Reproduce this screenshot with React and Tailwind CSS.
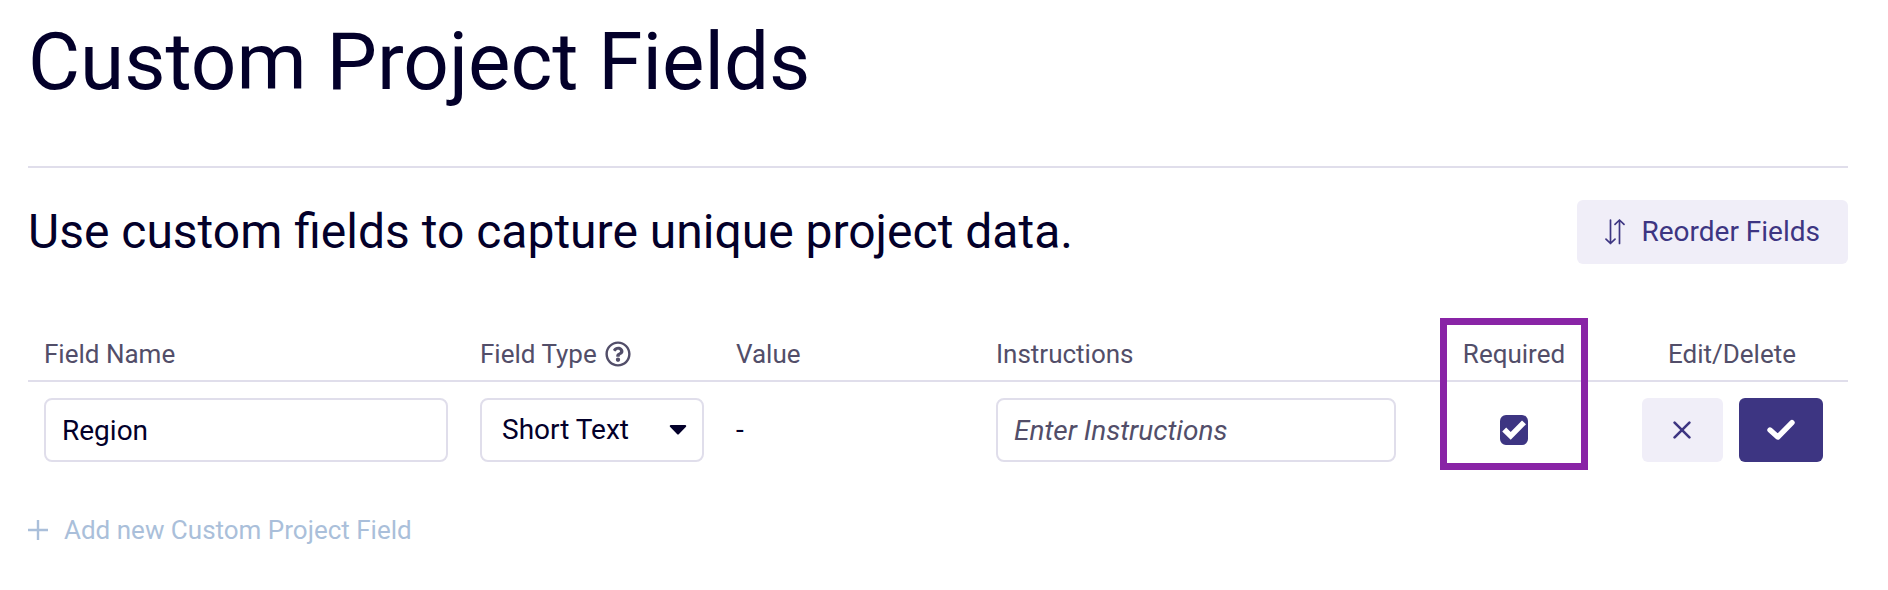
import { FaRegQuestionCircle } from "react-icons/fa";

const cell = "px-4 py-4";
const head = "border-b-2 border-[#e0deeb] px-4 pb-2 font-normal";

function ReorderIcon() {
  return (
    <svg aria-hidden="true" viewBox="0 0 20 26" className="h-[26px] w-5" fill="none" stroke="currentColor" strokeWidth="1.7" strokeLinecap="round" strokeLinejoin="round">
      <path d="M5.5 1V24.5M1 20.2L5.5 24.5L10 20.2" />
      <path d="M14.5 24.5V1M10 5.3L14.5 1L19 5.3" />
    </svg>
  );
}

function CloseIcon() {
  return (
    <svg aria-hidden="true" viewBox="0 0 18 18" className="size-[18px]" fill="none" stroke="currentColor" strokeWidth="2.6" strokeLinecap="round">
      <path d="M1.6 1.6L16.4 16.4M16.4 1.6L1.6 16.4" />
    </svg>
  );
}

function SaveIcon() {
  return (
    <svg aria-hidden="true" viewBox="0 0 28 22" className="h-[22px] w-7" fill="none" stroke="currentColor" strokeWidth="5.4" strokeLinecap="round" strokeLinejoin="round">
      <path d="M3 11L10.8 18L25 3.6" />
    </svg>
  );
}

function TickIcon() {
  return (
    <svg aria-hidden="true" viewBox="0 0 24 20" className="pointer-events-none invisible col-start-1 row-start-1 h-5 w-6 text-white peer-checked:visible" fill="none" stroke="currentColor" strokeWidth="5.6">
      <path d="M2.2 9.4L8.7 15.9L22 2.4" />
    </svg>
  );
}

function PlusIcon() {
  return (
    <svg aria-hidden="true" viewBox="0 0 20 20" className="size-5" fill="none" stroke="currentColor" strokeWidth="2.4">
      <path d="M10 0V20M0 10H20" />
    </svg>
  );
}

function CaretIcon() {
  return (
    <svg aria-hidden="true" viewBox="0 0 18 10" className="pointer-events-none absolute top-[27px] right-[17px] h-2.5 w-[18px]" fill="currentColor">
      <path d="M1.8 0H16.2C17.2 0 17.6 1.1 17 1.8L10 9C9.4 9.7 8.6 9.7 8 9L1 1.8C0.4 1.1 0.8 0 1.8 0Z" />
    </svg>
  );
}

export default function App() {
  return (
    <main className="min-h-screen bg-white pt-[18px] pr-10 pl-7 font-['Roboto',sans-serif] text-[#03002a]">
      <h1 className="border-b-2 border-[#e0deeb] pb-[60px] text-[80px] leading-[88px]">Custom Project Fields</h1>

      <div className="mt-8 flex items-center justify-between">
        <h2 className="text-[48px] leading-[64px]">Use custom fields to capture unique project data.</h2>
        <button type="button" className="flex h-16 items-center gap-4 rounded-md bg-[#f0eef8] px-7 text-[28px] text-[#3d3582]">
          <ReorderIcon />
          Reorder Fields
        </button>
      </div>

      <table className="mt-[72px] w-full table-fixed border-separate border-spacing-0 text-left text-[28px]">
        <colgroup>
          <col className="w-[436px]" />
          <col className="w-[256px]" />
          <col className="w-[260px]" />
          <col />
          <col className="w-[204px]" />
          <col className="w-[232px]" />
        </colgroup>
        <thead className="text-[26px] leading-9 text-[#524e69]">
          <tr>
            <th scope="col" id="col-name" className={head}>Field Name</th>
            <th scope="col" id="col-type" className={head}>
              <span className="flex items-center gap-2">
                Field Type
                <FaRegQuestionCircle aria-hidden="true" className="size-[26px]" />
              </span>
            </th>
            <th scope="col" className={head}>Value</th>
            <th scope="col" id="col-instructions" className={head}>Instructions</th>
            <th scope="col" id="col-required" className={`${head} relative text-center`}>
              Required
              <span className="pointer-events-none absolute inset-x-7 -top-[18px] h-[152px] border-[7px] border-[#8924a6]" />
            </th>
            <th scope="col" className={`${head} text-center`}>Edit/Delete</th>
          </tr>
        </thead>
        <tbody>
          <tr>
            <td className={cell}>
              <input type="text" aria-labelledby="col-name" defaultValue="Region" className="block h-16 w-full rounded-lg border-2 border-[#e0deeb] bg-white px-4" />
            </td>
            <td className={cell}>
              <div className="relative">
                <select aria-labelledby="col-type" className="block h-16 w-full appearance-none rounded-lg border-2 border-[#e0deeb] bg-white px-5">
                  <option>Short Text</option>
                </select>
                <CaretIcon />
              </div>
            </td>
            <td className={cell}>-</td>
            <td className={cell}>
              <input type="text" aria-labelledby="col-instructions" placeholder="Enter Instructions" className="block h-16 w-full rounded-lg border-2 border-[#e0deeb] bg-white px-4 placeholder:text-[#524e69] placeholder:italic" />
            </td>
            <td className={cell}>
              <div className="grid place-items-center">
                <input type="checkbox" aria-labelledby="col-required" defaultChecked className="peer col-start-1 row-start-1 h-[30px] w-7 appearance-none rounded-md border-2 border-[#3d3582] checked:bg-[#3d3582]" />
                <TickIcon />
              </div>
            </td>
            <td className={cell}>
              <div className="flex justify-center gap-4">
                <button type="button" aria-label="Cancel" className="flex h-16 w-[81px] items-center justify-center rounded-md bg-[#f0eef8] text-[#3d3582]">
                  <CloseIcon />
                </button>
                <button type="button" aria-label="Save" className="flex h-16 w-[84px] items-center justify-center rounded-md bg-[#3d3582] text-white">
                  <SaveIcon />
                </button>
              </div>
            </td>
          </tr>
        </tbody>
      </table>

      <button type="button" className="mt-[34px] flex items-center gap-4 text-[26px] leading-9 text-[#aabfda]">
        <PlusIcon />
        Add new Custom Project Field
      </button>
    </main>
  );
}
